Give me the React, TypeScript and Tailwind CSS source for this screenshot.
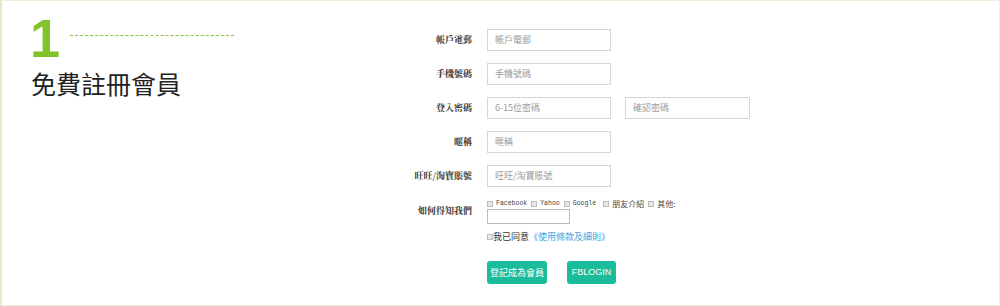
import React from "react";

const labelCls =
  "w-[72px] shrink-0 text-right text-[9px] font-bold text-[#333] leading-[21px] [font-family:'Noto_Serif_CJK_TC','Noto_Sans_CJK_TC',serif]";

function Field({ label, placeholder, extra }: { label: string; placeholder: string; extra?: string }) {
  return (
    <div className="flex items-start gap-[15px]">
      <div className={labelCls}>{label}</div>
      <div className="flex gap-[14px]">
        <div className="w-[124px] h-[22px] border border-[#d6d6d6] bg-white flex items-center pl-[7px] text-[9px] text-[#9a9a9a]">
          {placeholder}
        </div>
        {extra && (
          <div className="w-[125px] h-[22px] border border-[#d6d6d6] bg-white flex items-center pl-[7px] text-[9px] text-[#9a9a9a]">
            {extra}
          </div>
        )}
      </div>
    </div>
  );
}

function Box() {
  return <span className="inline-block w-[6px] h-[6px] border border-[#bbb] bg-[#e8e8e8] mr-[3px]" />;
}

export default function App() {
  return (
    <div
      className="w-[1000px] h-[306px] bg-white border-l-2 border-l-[#dcefc8] border-t border-t-[#e6f2da] border-b border-b-[#e6f2da] border-r border-r-[#f0f0e8] flex [font-family:'Noto_Sans_CJK_TC','Noto_Sans',sans-serif]"
    >
      <div className="w-[398px] shrink-0 pl-[28px] pt-[9px]">
        <div className="flex items-center">
          <span className="text-[54px] leading-[56px] font-bold text-[#80c42a] [font-family:'Liberation_Sans',Arial,sans-serif]">
            1
          </span>
          <div className="ml-[10px] mt-[-6px] w-[164px] border-t border-dashed border-[#8cc63f]" />
        </div>
        <div className="mt-[2px] ml-[1px] text-[25px] leading-[30px] text-[#222]">免費註冊會員</div>
      </div>
      <div className="pt-[28px] flex flex-col">
        <div className="flex flex-col gap-[12px]">
          <Field label="帳戶電郵" placeholder="帳戶電郵" />
          <Field label="手機號碼" placeholder="手機號碼" />
          <Field label="登入密碼" placeholder="6-15位密碼" extra="確認密碼" />
          <Field label="暱稱" placeholder="暱稱" />
          <Field label="旺旺/淘寶賬號" placeholder="旺旺/淘寶賬號" />
        </div>
        <div className="flex items-start gap-[15px] mt-[11px]">
          <div className={labelCls + " leading-[14px] pt-[2px]"}>如何得知我們</div>
          <div className="flex flex-col">
            <div className="flex items-center h-[12px] text-[6.5px] text-[#444] [font-family:'Liberation_Mono',monospace]">
              <Box />
              <span className="mr-[4px]">Facebook</span>
              <Box />
              <span className="mr-[4px]">Yahoo</span>
              <Box />
              <span className="mr-[7px]">Google</span>
              <Box />
              <span className="mr-[4px] text-[8px] [font-family:'Noto_Sans_CJK_TC',sans-serif]">朋友介紹</span>
              <Box />
              <span className="text-[8px] [font-family:'Noto_Sans_CJK_TC',sans-serif]">其他:</span>
            </div>
            <div className="w-[83px] h-[15px] border border-[#bbb] bg-white mt-[-1px]" />
            <div className="flex items-center mt-[7px] h-[12px] text-[9px]">
              <span className="inline-block w-[6px] h-[6px] border border-[#bbb] bg-[#e8e8e8]" />
              <span className="text-[#333]">我已同意</span>
              <span className="text-[#3ea0e0]">《使用條款及細則》</span>
            </div>
            <div className="flex gap-[20px] mt-[18px]">
              <div className="w-[60px] h-[23px] rounded-[3px] bg-[#1abc9c] text-white text-[9px] flex items-center justify-center">
                登記成為會員
              </div>
              <div className="w-[49px] h-[23px] rounded-[3px] bg-[#1abc9c] text-white text-[9px] flex items-center justify-center [font-family:'Liberation_Sans',Arial,sans-serif]">
                FBLOGIN
              </div>
            </div>
          </div>
        </div>
      </div>
    </div>
  );
}
